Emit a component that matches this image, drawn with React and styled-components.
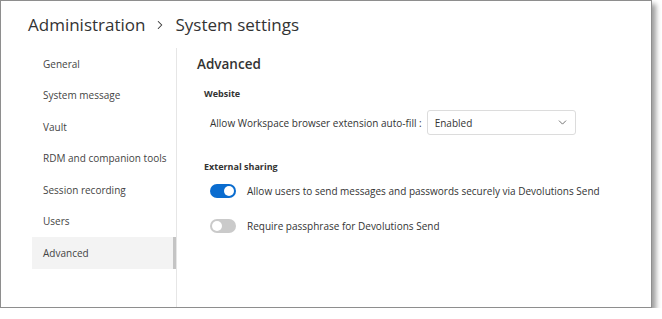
import React from 'react';
import styled, { createGlobalStyle } from 'styled-components';
import { ChevronDown, ChevronRight } from 'lucide-react';

const GlobalStyle = createGlobalStyle`
  html, body {
    margin: 0;
    padding: 0;
    background: #fff;
  }
  body {
    font-family: "Open Sans", "Noto Sans", sans-serif;
    color: #333;
  }
`;

const navItems = [
  'General',
  'System message',
  'Vault',
  'RDM and companion tools',
  'Session recording',
  'Users',
  'Advanced',
];

const App = () => {
  return (
    <>
      <GlobalStyle />
      <Window>
        <Header>
          <span>Administration</span>
          <ChevronRight size={14} strokeWidth={1.8} color="#333" />
          <span>System settings</span>
        </Header>
        <Body>
          <Sidebar>
            {navItems.map((item) => (
              <NavItem key={item} $active={item === 'Advanced'}>
                {item}
              </NavItem>
            ))}
          </Sidebar>
          <Content>
            <Title>Advanced</Title>
            <Section>
              <SectionTitle>Website</SectionTitle>
              <FieldRow>
                <Label>Allow Workspace browser extension auto-fill :</Label>
                <Select>
                  <span>Enabled</span>
                  <ChevronDown size={13} strokeWidth={1.5} color="#555" />
                </Select>
              </FieldRow>
            </Section>
            <Section $gap>
              <SectionTitle>External sharing</SectionTitle>
              <ToggleRow>
                <Toggle $on />
                <Label>Allow users to send messages and passwords securely via Devolutions Send</Label>
              </ToggleRow>
              <ToggleRow>
                <Toggle />
                <Label>Require passphrase for Devolutions Send</Label>
              </ToggleRow>
            </Section>
          </Content>
        </Body>
      </Window>
    </>
  );
};

const Window = styled.div`
  width: 650px;
  height: 306px;
  border: 1px solid #8e8e8e;
  box-shadow: 4px 4px 5px rgba(0, 0, 0, 0.38);
  background: #fff;
  display: flex;
  flex-direction: column;
  box-sizing: content-box;
`;

const Header = styled.div`
  height: 47px;
  display: flex;
  align-items: center;
  gap: 8px;
  padding-left: 27px;
  padding-bottom: 1px;
  box-sizing: border-box;
  font-size: 17px;
  color: #333;
  svg {
    margin-top: 1px;
  }
`;

const Body = styled.div`
  flex: 1;
  display: flex;
`;

const Sidebar = styled.nav`
  width: 176px;
  padding-left: 31px;
  box-sizing: border-box;
  border-right: 1px solid #e6e6e6;
  display: flex;
  flex-direction: column;
`;

const NavItem = styled.div`
  height: 31.5px;
  display: flex;
  align-items: center;
  padding-left: 11px;
  font-size: 10px;
  color: #444;
  white-space: nowrap;
  background: ${(p) => (p.$active ? '#f3f3f3' : 'transparent')};
  border-right: 3px solid ${(p) => (p.$active ? '#c4c4c4' : 'transparent')};
`;

const Content = styled.div`
  flex: 1;
  padding: 8px 0 0 20px;
`;

const Title = styled.div`
  font-size: 13.5px;
  font-weight: 600;
  color: #333;
  height: 16px;
  line-height: 16px;
`;

const Section = styled.div`
  padding-left: 7px;
  margin-top: ${(p) => (p.$gap ? '26px' : '16px')};
`;

const SectionTitle = styled.div`
  font-size: 9px;
  font-weight: 700;
  color: #333;
  line-height: 12px;
`;

const FieldRow = styled.div`
  display: flex;
  align-items: center;
  gap: 5px;
  padding-left: 6px;
  margin-top: 10px;
`;

const Label = styled.span`
  font-size: 10px;
  color: #333;
`;

const Select = styled.div`
  width: 149px;
  height: 25px;
  box-sizing: border-box;
  border: 1px solid #dcdcdc;
  border-radius: 3px;
  display: flex;
  align-items: center;
  justify-content: space-between;
  padding: 0 6px 0 7px;
  font-size: 10px;
  color: #333;
`;

const ToggleRow = styled.div`
  display: flex;
  align-items: center;
  gap: 11px;
  padding-left: 6px;
  height: 14px;
  margin-top: 11px;
  & + & {
    margin-top: 21px;
  }
`;

const Toggle = styled.span`
  position: relative;
  width: 26px;
  height: 14px;
  border-radius: 7px;
  flex-shrink: 0;
  background: ${(p) => (p.$on ? '#0a6ccf' : '#cacaca')};
  &::after {
    content: '';
    position: absolute;
    top: 2px;
    left: ${(p) => (p.$on ? '14px' : '2px')};
    width: 10px;
    height: 10px;
    border-radius: 50%;
    background: #fff;
  }
`;

export default App;
